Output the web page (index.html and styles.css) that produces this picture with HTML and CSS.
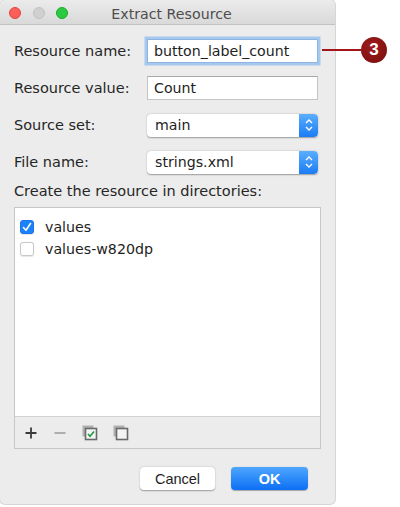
FILE: index.html
```html
<!DOCTYPE html>
<html>
<head>
<meta charset="utf-8">
<link rel="stylesheet" href="styles.css">
</head>
<body>
<div class="page">
  <div class="dialog">
    <div class="titlebar">
      <div class="lights">
        <span class="light red"></span>
        <span class="light gray"></span>
        <span class="light green"></span>
      </div>
      <div class="title">Extract Resource</div>
    </div>
    <div class="content">
      <div class="form">
        <div class="label">Resource name:</div>
        <div class="field focus"><div class="input">button_label_count</div></div>
        <div class="label">Resource value:</div>
        <div class="field"><div class="input">Count</div></div>
        <div class="label">Source set:</div>
        <div class="field"><div class="select"><span>main</span><span class="stepper"><svg width="10" height="16" viewBox="0 0 10 16"><path d="M2 6 L5 3 L8 6 M2 10 L5 13 L8 10" fill="none" stroke="#fff" stroke-width="1.4"/></svg></span></div></div>
        <div class="label">File name:</div>
        <div class="field"><div class="select"><span>strings.xml</span><span class="stepper"><svg width="10" height="16" viewBox="0 0 10 16"><path d="M2 6 L5 3 L8 6 M2 10 L5 13 L8 10" fill="none" stroke="#fff" stroke-width="1.4"/></svg></span></div></div>
      </div>
      <div class="section">Create the resource in directories:</div>
      <div class="listbox">
        <div class="items">
          <div class="item"><span class="cb checked"><svg width="14" height="14" viewBox="0 0 14 14"><path d="M3.5 7.5 L6 10.2 L10.5 3.5" fill="none" stroke="#fff" stroke-width="1.6" stroke-linecap="round" stroke-linejoin="round"/></svg></span><span>values</span></div>
          <div class="item"><span class="cb"></span><span>values-w820dp</span></div>
        </div>
        <div class="toolbar">
          <svg class="tool" width="14" height="14" viewBox="0 0 14 14"><path d="M7 1.5 V12.5 M1.5 7 H12.5" stroke="#3a3a3a" stroke-width="1.8"/></svg>
          <svg class="tool" width="14" height="14" viewBox="0 0 14 14"><path d="M1.5 7 H12.5" stroke="#9a9a9a" stroke-width="1.6"/></svg>
          <svg class="tool" width="16" height="16" viewBox="0 0 16 16"><rect x="0.5" y="0.5" width="11" height="11" fill="#b0b0b0"/><rect x="3.5" y="3.5" width="11" height="11" fill="#f4f4f4" stroke="#6a6a6a" stroke-width="1.6"/><path d="M6 9 L8 11.3 L12 6.5" fill="none" stroke="#1f9a3a" stroke-width="1.6"/></svg>
          <svg class="tool" width="16" height="16" viewBox="0 0 16 16"><rect x="0.5" y="0.5" width="11" height="11" fill="#b0b0b0"/><rect x="3.5" y="3.5" width="11" height="11" fill="#f4f4f4" stroke="#6a6a6a" stroke-width="1.6"/></svg>
        </div>
      </div>
      <div class="buttons">
        <div class="btn cancel">Cancel</div>
        <div class="btn ok">OK</div>
      </div>
    </div>
  </div>
  <div class="callout">
    <span class="line"></span>
    <span class="badge">3</span>
  </div>
</div>
</body>
</html>
```

FILE: styles.css
```css
html, body {
  margin: 0;
  padding: 0;
  background: #ffffff;
}
body {
  width: 400px;
  height: 507px;
  overflow: hidden;
  font-family: "DejaVu Sans", "Noto Sans", sans-serif;
  color: #262626;
}
.page {
  position: relative;
  width: 400px;
  height: 507px;
}
.dialog {
  width: 335px;
  height: 504px;
  background: #ececec;
  border-radius: 5px;
  box-shadow: 0 0 0 1px #d6d6d6;
  overflow: hidden;
}
.titlebar {
  position: relative;
  height: 25px;
  background: linear-gradient(#ebebeb, #d9d9d9);
  border-bottom: 1px solid #c2c2c2;
  box-sizing: border-box;
  display: flex;
  align-items: center;
  justify-content: center;
}
.lights {
  position: absolute;
  left: 9px;
  top: 7px;
  display: flex;
  gap: 11.5px;
}
.light {
  width: 12px;
  height: 12px;
  border-radius: 50%;
  box-sizing: border-box;
}
.light.red { background: #fc5f57; border: 1px solid #e0443e; }
.light.gray { background: #d0d0d0; border: 1px solid #c2c2c2; }
.light.green { background: #2acb42; border: 1px solid #1aab29; }
.title {
  font-size: 14.2px;
  color: #4d4d4d;
  padding-left: 8px;
  padding-top: 3px;
}
.content {
  padding: 14px 14px 0 14px;
}
.form {
  display: grid;
  grid-template-columns: 131px 175px;
  grid-auto-rows: 24px;
  row-gap: 13px;
  align-items: center;
}
.label {
  font-size: 14.5px;
  color: #262626;
}
.field {
  height: 24px;
  display: flex;
  align-items: center;
}
.input {
  box-sizing: border-box;
  width: 171px;
  height: 24px;
  margin-left: 2px;
  background: #fff;
  border: 1px solid #c4c4c4;
  border-top-color: #a8a8a8;
  font-size: 14.2px;
  padding: 0 6px;
  line-height: 22px;
  color: #1e1e1e;
}
.focus .input {
  border: 1px solid #8fb6e3;
  box-shadow: 0 0 0 2.5px #a5c8ef;
}
.select {
  box-sizing: border-box;
  width: 171px;
  height: 23px;
  margin-left: 2px;
  background: #fff;
  border-radius: 4px;
  box-shadow: 0 0.5px 1.5px rgba(0,0,0,0.35);
  display: flex;
  align-items: center;
  justify-content: space-between;
  font-size: 14.2px;
  padding-left: 8px;
  color: #1e1e1e;
  overflow: hidden;
}
.stepper {
  width: 19px;
  height: 23px;
  background: linear-gradient(#5aaefc, #1b7cf5);
  display: flex;
  align-items: center;
  justify-content: center;
  border-radius: 0 4px 4px 0;
}
.section {
  font-size: 14.5px;
  margin-top: 9px;
  height: 18px;
  color: #262626;
}
.listbox {
  margin-top: 6px;
  width: 307px;
  height: 242px;
  box-sizing: border-box;
  border: 1px solid #c6c6c6;
  background: #fff;
  display: flex;
  flex-direction: column;
}
.items {
  flex: 1;
  padding-top: 8px;
}
.item {
  display: flex;
  align-items: center;
  gap: 11px;
  height: 22px;
  padding-left: 5px;
  font-size: 14.2px;
  color: #1e1e1e;
}
.cb {
  width: 14px;
  height: 14px;
  box-sizing: border-box;
  border-radius: 3px;
  border: 1px solid #c8c8c8;
  background: #fff;
  box-shadow: 0 0.5px 1px rgba(0,0,0,0.1);
  display: flex;
}
.cb.checked {
  background: #1a82fb;
  border-color: #1a76e8;
}
.cb.checked svg {
  margin: -1px;
}
.toolbar {
  height: 31px;
  background: #ececec;
  border-top: 1px solid #d2d2d2;
  display: flex;
  align-items: center;
  padding-left: 9px;
  gap: 15px;
}
.buttons {
  display: flex;
  justify-content: flex-end;
  gap: 16px;
  margin-top: 18px;
  padding-right: 13px;
}
.btn {
  height: 23px;
  border-radius: 4px;
  display: flex;
  align-items: center;
  justify-content: center;
  font-family: "Liberation Sans", Arial, sans-serif;
  font-size: 14.5px;
}
.cancel {
  width: 75px;
  background: #fff;
  box-shadow: 0 0.5px 1.5px rgba(0,0,0,0.35);
  color: #1e1e1e;
}
.ok {
  width: 77px;
  background: linear-gradient(#4ea7fd, #0c6ff5);
  box-shadow: 0 0.5px 1px rgba(0,0,0,0.3);
  color: #fff;
  font-weight: bold;
}
.callout {
  position: absolute;
  left: 322px;
  top: 37px;
  display: flex;
  align-items: center;
}
.line {
  width: 39px;
  height: 2px;
  background: #a3151b;
}
.badge {
  width: 26px;
  height: 26px;
  border-radius: 50%;
  background: radial-gradient(circle at 40% 35%, #9c1c1c, #7a0c0c);
  color: #fff;
  font-family: "Liberation Sans", Arial, sans-serif;
  font-weight: bold;
  font-size: 17px;
  display: flex;
  align-items: center;
  justify-content: center;
}
```
